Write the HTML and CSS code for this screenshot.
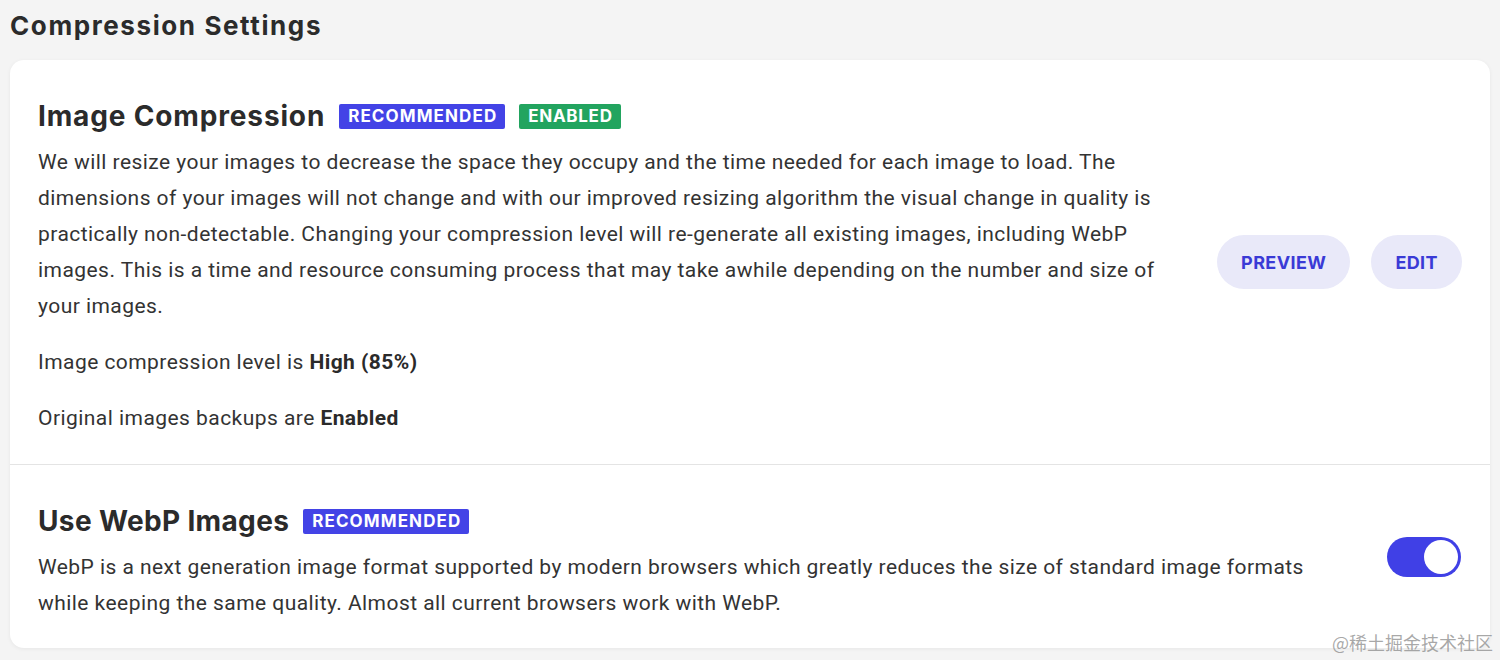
FILE: index.html
```html
<!DOCTYPE html>
<html lang="en">
<head>
<meta charset="utf-8">
<title>Compression Settings</title>
<link rel="stylesheet" href="styles.css">
</head>
<body>
<main class="page">
  <h1 class="page-title">Compression Settings</h1>
  <section class="card">
    <div class="setting setting-first">
      <div class="setting-body">
        <h2 class="setting-title">Image Compression <span class="badge badge-blue">RECOMMENDED</span><span class="badge badge-green">ENABLED</span></h2>
        <p class="desc">We will resize your images to decrease the space they occupy and the time needed for each image to load. The dimensions of your images will not change and with our improved resizing algorithm the visual change in quality is practically non-detectable. Changing your compression level will re-generate all existing images, including WebP images. This is a time and resource consuming process that may take awhile depending on the number and size of your images.</p>
        <p class="desc">Image compression level is <strong>High (85%)</strong></p>
        <p class="desc">Original images backups are <strong>Enabled</strong></p>
      </div>
      <div class="actions">
        <button class="pill">PREVIEW</button>
        <button class="pill">EDIT</button>
      </div>
    </div>
    <div class="setting setting-second">
      <div class="setting-body">
        <h2 class="setting-title setting-title-tight">Use WebP Images <span class="badge badge-blue">RECOMMENDED</span></h2>
        <p class="desc desc-wide">WebP is a next generation image format supported by modern browsers which greatly reduces the size of standard image formats while keeping the same quality. Almost all current browsers work with WebP.</p>
      </div>
      <div class="toggle" role="switch" aria-checked="true"><span class="knob"></span></div>
    </div>
  </section>
  <div class="watermark">@稀土掘金技术社区</div>
</main>
</body>
</html>
```
FILE: styles.css
```css
* { box-sizing: border-box; }
html, body { margin: 0; padding: 0; }
body {
  background: #f4f4f4;
  font-family: Roboto, "Liberation Sans", sans-serif;
  color: #333;
  width: 1500px;
  height: 660px;
  overflow: hidden;
}
.page {
  position: relative;
  padding: 6px 10px 0 10px;
  height: 660px;
}
.page-title {
  margin: 0;
  font-family: Inter, "Liberation Sans", sans-serif;
  font-weight: 700;
  font-size: 26px;
  line-height: 40px;
  color: #2b2b2b;
  letter-spacing: 1.6px;
}
.card {
  margin-top: 14px;
  background: #fff;
  border-radius: 14px;
  box-shadow: 0 1px 4px rgba(0,0,0,0.06);
  overflow: hidden;
}
.setting {
  display: flex;
  align-items: center;
  padding: 36px 28px 28px 28px;
}
.setting-first { border-bottom: 1px solid #e4e4e4; }
.setting-second { padding: 36px 29px 27px 28px; }
.setting-body { flex: 1; }
.setting-title {
  margin: 0 0 8px 0;
  font-family: Inter, "Liberation Sans", sans-serif;
  font-weight: 700;
  font-size: 28px;
  line-height: 40px;
  color: #2b2b2b;
  letter-spacing: 0.85px;
  display: flex;
  align-items: center;
}
.setting-title-tight { letter-spacing: 0.35px; }
.badge {
  display: inline-block;
  font-family: Inter, "Liberation Sans", sans-serif;
  font-weight: 700;
  font-size: 17px;
  line-height: 25px;
  height: 25px;
  padding: 0 8px 0 9px;
  color: #fff;
  border-radius: 2px;
  letter-spacing: 0.7px;
  margin-left: 14px;
}
.badge-blue { background: #4343e6; letter-spacing: 1.1px; }
.badge-green { background: #22a45f; }
.desc {
  margin: 0 0 20px 0;
  font-size: 21px;
  line-height: 36px;
  letter-spacing: 0.45px;
  color: #333;
  max-width: 1130px;
}
.desc:last-child { margin-bottom: 0; }
.desc strong { font-weight: 700; color: #2a2a2a; }
.desc-wide { max-width: 1290px; }
.actions {
  display: flex;
  gap: 21px;
  margin-left: 48px;
  margin-top: -8px;
}
.pill {
  border: none;
  background: #e9e9f9;
  color: #3a3ad6;
  font-family: Inter, "Liberation Sans", sans-serif;
  font-weight: 700;
  font-size: 18px;
  letter-spacing: 0.4px;
  height: 54px;
  padding: 0 24px;
  border-radius: 27px;
  cursor: pointer;
}
.toggle {
  width: 74px;
  height: 40px;
  border-radius: 20px;
  background: #4040e6;
  position: relative;
  flex-shrink: 0;
  margin-top: -8px;
}
.knob {
  position: absolute;
  right: 3px;
  top: 3px;
  width: 34px;
  height: 34px;
  border-radius: 50%;
  background: #fff;
}
.watermark {
  position: absolute;
  right: 7px;
  bottom: 5px;
  font-family: "Noto Sans CJK SC", sans-serif;
  font-size: 18px;
  color: rgba(140,140,140,0.75);
}
```
